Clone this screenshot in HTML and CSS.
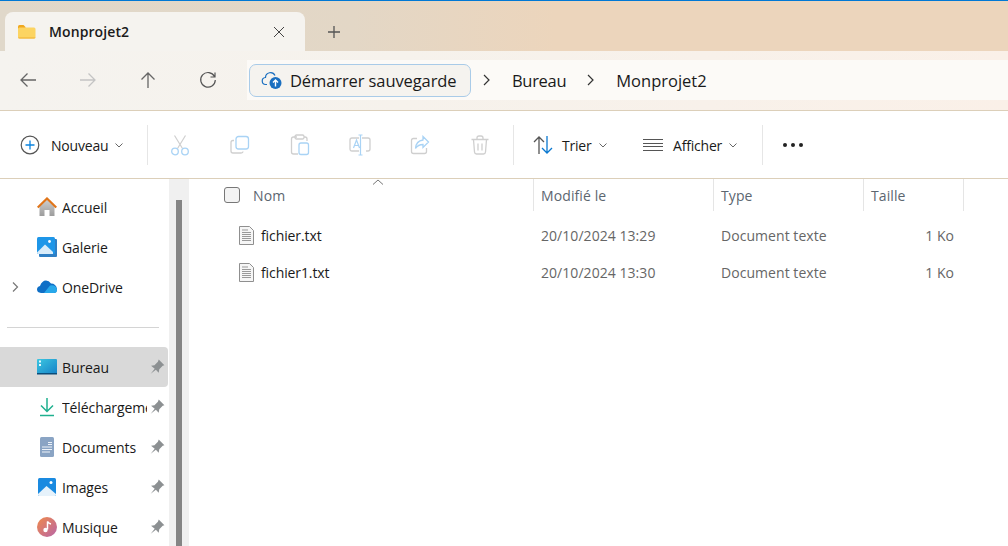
FILE: index.html

```html
<!DOCTYPE html>
<html lang="fr">
<head>
  <meta charset="UTF-8">
  <title>Monprojet2</title>
  <link rel="stylesheet" href="styles.css">
</head>
<body>
  <div class="titlebar">
    <div class="tab">
      <svg class="tab-icon" width="20" height="20" viewBox="0 0 20 20"><path d="M1 4.500q0-1.500 1.500-1.500h4l2 2v2H1z" fill="#f0a81e"/><path d="M1 7q0-1.500 1.500-1.500H17q1.500 0 1.500 1.500v8q0 1.500-1.500 1.500H2.500Q1 16.500 1 15z" fill="#fcd462"/><path d="M1 15.500h17.500v.2q-.3.8-1.500.8H2.500q-1.200 0-1.500-1z" fill="#f0b030"/></svg>
      <span class="tab-title">Monprojet2</span>
      <svg class="tab-close" width="12" height="12" viewBox="0 0 12 12"><path d="M1 1l10 10M11 1L1 11" stroke="#444" stroke-width="1" fill="none"/></svg>
    </div>
    <svg class="tab-add" width="14" height="14" viewBox="0 0 14 14"><path d="M7 1v12M1 7h12" stroke="#555" stroke-width="1.300" fill="none"/></svg>
  </div>

  <div class="navbar">
    <div class="nav-btn"><svg width="20" height="20" viewBox="0 0 20 20"><path d="M18 10H3M9.500 3.500L3 10l6.500 6.500" stroke="#666" stroke-width="1.300" fill="none"/></svg></div>
    <div class="nav-btn"><svg width="20" height="20" viewBox="0 0 20 20"><path d="M2 10h15M10.500 3.500L17 10l-6.500 6.500" stroke="#c4c4c4" stroke-width="1.300" fill="none"/></svg></div>
    <div class="nav-btn"><svg width="20" height="20" viewBox="0 0 20 20"><path d="M10 18V3M3.500 9.500L10 3l6.500 6.500" stroke="#666" stroke-width="1.300" fill="none"/></svg></div>
    <div class="nav-btn"><svg width="20" height="20" viewBox="0 0 20 20"><path d="M16.500 6.500A7.300 7.300 0 1 0 17.300 10M17 2.500v4.500h-4.500" stroke="#555" stroke-width="1.200" fill="none"/></svg></div>
    <div class="address">
      <div class="backup">
        <svg width="22" height="22" viewBox="0 0 22 22"><path d="M6 15.500H5a3.500 3.500 0 0 1-.5-7A5 5 0 0 1 14 6.500" stroke="#1a6fc0" stroke-width="1.200" fill="none"/><circle cx="14.500" cy="14" r="6" fill="#1a6fc0"/><path d="M14.500 17.500v-6M12 13.500l2.500-2.500 2.500 2.500" stroke="#fff" stroke-width="1.400" fill="none"/></svg>
        <span>Démarrer sauvegarde</span>
      </div>
      <svg class="crumb-sep" width="8" height="12" viewBox="0 0 8 12"><path d="M2 1l5 5-5 5" stroke="#333" stroke-width="1.200" fill="none"/></svg>
      <span class="crumb crumb-bureau">Bureau</span>
      <svg class="crumb-sep" width="8" height="12" viewBox="0 0 8 12"><path d="M2 1l5 5-5 5" stroke="#333" stroke-width="1.200" fill="none"/></svg>
      <span class="crumb">Monprojet2</span>
    </div>
  </div>

  <div class="toolbar">
    <div class="tool-new">
      <svg width="20" height="20" viewBox="0 0 20 20"><circle cx="10" cy="10" r="8.800" stroke="#555" stroke-width="1.200" fill="none"/><path d="M10 5.500v9M5.500 10h9" stroke="#0a84e0" stroke-width="1.300" fill="none"/></svg>
      <span>Nouveau</span>
      <svg class="chev" width="8" height="5" viewBox="0 0 8 5"><path d="M.5.500L4 4 7.500.500" stroke="#666" fill="none"/></svg>
    </div>
    <div class="tool-sep"></div>
    <div class="tool"><svg width="20" height="22" viewBox="0 0 20 22"><path d="M4.500 1.500l8 13M15.500 1.500l-8 13" stroke="#cfcfcf" stroke-width="1.200" fill="none"/><circle cx="5" cy="17.500" r="3.300" stroke="#a9d3f5" stroke-width="1.300" fill="none"/><circle cx="15" cy="17.500" r="3.300" stroke="#a9d3f5" stroke-width="1.300" fill="none"/></svg></div>
    <div class="tool"><svg width="20" height="20" viewBox="0 0 20 20"><path d="M4 5.500H3q-2 0-2 2V16q0 2 2 2h8q2 0 2-1.500" stroke="#cfcfcf" stroke-width="1.300" fill="none"/><rect x="6" y="1.500" width="12.500" height="12.500" rx="2.500" stroke="#a9d3f5" stroke-width="1.300" fill="none"/></svg></div>
    <div class="tool"><svg width="20" height="22" viewBox="0 0 20 22"><path d="M7 3H3.500Q1.500 3 1.500 5v13q0 2 2 2H8M14 3h1q2 0 2 2v2" stroke="#cfcfcf" stroke-width="1.300" fill="none"/><rect x="5" y="1" width="9" height="4" rx="1.500" stroke="#cfcfcf" stroke-width="1.300" fill="none"/><rect x="9" y="9" width="9.500" height="11.500" rx="2" stroke="#a9d3f5" stroke-width="1.300" fill="none"/></svg></div>
    <div class="tool"><svg width="22" height="22" viewBox="0 0 22 22"><path d="M13 4h6q2 0 2 2v9q0 2-2 2h-2M10 17H3q-2 0-2-2V6q0-2 2-2h7" stroke="#cfcfcf" stroke-width="1.300" fill="none"/><path d="M11.500 1v20M9.500 1h4M9.500 21h4M4.500 14l3-8 3 8M5.500 11.500h4.500" stroke="#a9d3f5" stroke-width="1.200" fill="none"/></svg></div>
    <div class="tool"><svg width="20" height="20" viewBox="0 0 20 20"><path d="M7 3.500H3.500q-2 0-2 2v11q0 2 2 2h11q2 0 2-2V13" stroke="#cfcfcf" stroke-width="1.300" fill="none"/><path d="M13 1.500l5.500 5.500L13 12.500V9.500q-5 0-7.500 4 .5-7.500 7.500-8.500z" stroke="#a9d3f5" stroke-width="1.300" fill="none"/></svg></div>
    <div class="tool"><svg width="18" height="20" viewBox="0 0 18 20"><path d="M.5 4.500h17M6 4.500V3q0-2 2-2h2q2 0 2 2v1.500M2.500 4.500l1 12.500q.2 2 2 2h7q1.800 0 2-2l1-12.500M7 8.500v7M11 8.500v7" stroke="#cfcfcf" stroke-width="1.300" fill="none"/></svg></div>
    <div class="tool-sep sep-sort"></div>
    <div class="tool-menu menu-sort">
      <svg width="20" height="20" viewBox="0 0 20 20"><path d="M6 19V2M1 7l5-5 5 5" stroke="#555" stroke-width="1.300" fill="none"/><path d="M14 1v17M9 13l5 5 5-5" stroke="#0a78d0" stroke-width="1.300" fill="none"/></svg>
      <span>Trier</span>
      <svg class="chev" width="8" height="5" viewBox="0 0 8 5"><path d="M.5.500L4 4 7.500.500" stroke="#666" fill="none"/></svg>
    </div>
    <div class="tool-menu menu-view">
      <svg width="20" height="20" viewBox="0 0 20 20"><path d="M0 4.500h20M0 8.500h20M0 11.500h20M0 15.500h20" stroke="#555" stroke-width="1.200" fill="none"/></svg>
      <span>Afficher</span>
      <svg class="chev" width="8" height="5" viewBox="0 0 8 5"><path d="M.5.500L4 4 7.500.500" stroke="#666" fill="none"/></svg>
    </div>
    <div class="tool-sep"></div>
    <div class="tool-more"><i></i><i></i><i></i></div>
  </div>

  <div class="content">
    <aside class="sidebar">
      <div class="side-item">
        <span class="side-chev"></span>
        <svg width="20" height="20" viewBox="0 0 20 20"><defs><linearGradient id="houseWall" x1="0" y1="0" x2="0" y2="1"><stop offset="0" stop-color="#d0d0d0"/><stop offset="1" stop-color="#9c9c9c"/></linearGradient></defs><path d="M2.500 9L10 2l7.500 7v10h-5v-6h-5v6h-5z" fill="url(#houseWall)"/><path d="M.7 10.500L10 1.500l9.300 9" stroke="#e0751a" stroke-width="2.200" fill="none"/></svg>
        <span class="side-label">Accueil</span>
      </div>
      <div class="side-item">
        <span class="side-chev"></span>
        <svg width="20" height="20" viewBox="0 0 20 20"><rect x="2" y="2" width="18" height="18" rx="1" fill="#2f7fc4"/><rect y="0" width="18" height="17" rx="1.500" fill="#1e96e8"/><path d="M0 15.500L8 7.500l8 7.500v2H1.500Q0 17 0 15.500z" fill="#d8ecfa"/><circle cx="12.500" cy="4.500" r="1.400" fill="#fff"/></svg>
        <span class="side-label">Galerie</span>
      </div>
      <div class="side-item">
        <span class="side-chev"><svg width="7" height="10" viewBox="0 0 7 10"><path d="M1 .5L5.500 5 1 9.500" stroke="#777" stroke-width="1.200" fill="none"/></svg></span>
        <svg width="20" height="20" viewBox="0 0 20 20"><path d="M4 16q-4-.500-4-3.500 0-3 3-3.500Q5 3.500 9 3.500q3 0 5 3 5 0 6 5.500 0 4-3 4z" fill="#0f6fc6"/><path d="M7 16l6-7.500q3-1 5.500 1Q20 11 20 13q0 3-3 3z" fill="#28a8ea"/></svg>
        <span class="side-label">OneDrive</span>
      </div>
      <div class="side-divider"></div>
      <div class="side-item side-current">
        <span class="side-chev"></span>
        <svg width="20" height="20" viewBox="0 0 20 20"><defs><linearGradient id="deskBg" x1="0" y1="0" x2="1" y2="1"><stop offset="0" stop-color="#3cc6e0"/><stop offset="1" stop-color="#1682c8"/></linearGradient></defs><rect y="2" width="20" height="15" rx="1" fill="url(#deskBg)"/><rect x="2" y="3.500" width="2" height="2" fill="#e4f8ff"/><rect x="2" y="7" width="2" height="2" fill="#e4f8ff"/><rect y="16" width="20" height="1.500" fill="#0b4c78"/></svg>
        <span class="side-label">Bureau</span>
        <svg class="pin" width="16" height="16" viewBox="0 0 14 14"><path d="M8.500.5l5 5-1.500.5-3 3-.5 3L6 9.500 1.500 13 5 8.500 1.800 6l3-.5 3-3z" fill="#8c9092"/></svg>
      </div>
      <div class="side-item">
        <span class="side-chev"></span>
        <svg width="20" height="20" viewBox="0 0 20 20"><path d="M10 1v13M4 8.500l6 6 6-6" stroke="#1fb08f" stroke-width="1.500" fill="none"/><path d="M3 18.500h14" stroke="#1fb08f" stroke-width="1.500"/></svg>
        <span class="side-label">Téléchargements</span>
        <svg class="pin" width="16" height="16" viewBox="0 0 14 14"><path d="M8.500.5l5 5-1.500.5-3 3-.5 3L6 9.500 1.500 13 5 8.500 1.800 6l3-.5 3-3z" fill="#8c9092"/></svg>
      </div>
      <div class="side-item">
        <span class="side-chev"></span>
        <svg width="20" height="20" viewBox="0 0 20 20"><rect x="3" y="0" width="14" height="20" rx="1.500" fill="#8aa4c4"/><path d="M5 10h10M5 12.500h10M5 15h8M11 5.500h4M11 7.500h4" stroke="#eef3f9"/></svg>
        <span class="side-label">Documents</span>
        <svg class="pin" width="16" height="16" viewBox="0 0 14 14"><path d="M8.500.5l5 5-1.500.5-3 3-.5 3L6 9.500 1.500 13 5 8.500 1.800 6l3-.5 3-3z" fill="#8c9092"/></svg>
      </div>
      <div class="side-item">
        <span class="side-chev"></span>
        <svg width="20" height="20" viewBox="0 0 20 20"><rect x="1" y="1" width="18" height="18" rx="1.500" fill="#1a8ae0"/><path d="M1 17L9.500 9 19 17v.5q0 1.500-1.500 1.500h-15Q1 19 1 17.500z" fill="#e6f2fb"/><circle cx="14" cy="5.500" r="1.500" fill="#fff"/></svg>
        <span class="side-label">Images</span>
        <svg class="pin" width="16" height="16" viewBox="0 0 14 14"><path d="M8.500.5l5 5-1.500.5-3 3-.5 3L6 9.500 1.500 13 5 8.500 1.800 6l3-.5 3-3z" fill="#8c9092"/></svg>
      </div>
      <div class="side-item">
        <span class="side-chev"></span>
        <svg width="20" height="20" viewBox="0 0 20 20"><defs><linearGradient id="musicBg" x1="0" y1="0" x2="1" y2="1"><stop offset="0" stop-color="#f08a4a"/><stop offset="1" stop-color="#b865a8"/></linearGradient></defs><circle cx="10" cy="10" r="10" fill="url(#musicBg)"/><path d="M10.500 4.500v8" stroke="#fff" stroke-width="1.500"/><path d="M10.500 4.500q1 2 3.500 2.500" stroke="#fff" stroke-width="1.500" fill="none"/><circle cx="8.500" cy="13" r="2.200" fill="#fff"/></svg>
        <span class="side-label">Musique</span>
        <svg class="pin" width="16" height="16" viewBox="0 0 14 14"><path d="M8.500.5l5 5-1.500.5-3 3-.5 3L6 9.500 1.500 13 5 8.500 1.800 6l3-.5 3-3z" fill="#8c9092"/></svg>
      </div>
    </aside>

    <div class="scroll-track"><div class="scroll-thumb"></div></div>

    <main class="files">
      <div class="sort-arrow"><svg width="12" height="6" viewBox="0 0 12 6"><path d="M1 5.500L6 1l5 4.500" stroke="#777" fill="none"/></svg></div>
      <div class="file-row file-head">
        <div class="head-cell head-name"><span class="check"></span><span class="head-nom">Nom</span></div>
        <div class="head-cell">Modifié le</div>
        <div class="head-cell">Type</div>
        <div class="head-cell">Taille</div>
      </div>
      <div class="file-row file-item">
        <div class="cell-name">
          <svg width="15" height="19" viewBox="0 0 15 19"><path d="M.5.500h10l4 4v14H.5z" fill="#f6f6f6" stroke="#8f8f8f"/><path d="M3 4h6M3 6.500h9M3 8.500h9M3 10.500h9M3 12.500h9M3 14.500h9" stroke="#999"/></svg>
          <span>fichier.txt</span>
        </div>
        <div class="cell">20/10/2024 13:29</div>
        <div class="cell">Document texte</div>
        <div class="cell cell-size">1 Ko</div>
      </div>
      <div class="file-row file-item">
        <div class="cell-name">
          <svg width="15" height="19" viewBox="0 0 15 19"><path d="M.5.500h10l4 4v14H.5z" fill="#f6f6f6" stroke="#8f8f8f"/><path d="M3 4h6M3 6.500h9M3 8.500h9M3 10.500h9M3 12.500h9M3 14.500h9" stroke="#999"/></svg>
          <span>fichier1.txt</span>
        </div>
        <div class="cell">20/10/2024 13:30</div>
        <div class="cell">Document texte</div>
        <div class="cell cell-size">1 Ko</div>
      </div>
    </main>
  </div>
</body>
</html>
```

FILE: styles.css

```css
* {
  box-sizing: border-box;
}

html, body {
  height: 546px;
}

body {
  margin: 0;
  overflow: hidden;
  background: #fff;
  color: #1a1a1a;
  font-family: 'Open Sans', 'Noto Sans', sans-serif;
  font-size: 14px;
  letter-spacing: -0.2px;
}

svg {
  display: block;
  flex: none;
}

/* title band */
.titlebar {
  height: 51px;
  display: flex;
  align-items: flex-end;
  padding-left: 5px;
  border-top: 1px solid #0078d4;
  background: linear-gradient(90deg, #e0d8ca 0%, #e3d7c6 35%, #ecd5bc 55%, #ecd5bc 100%);
}

.tab {
  width: 300px;
  height: 39px;
  display: flex;
  align-items: center;
  padding: 0 20px 0 12px;
  background: #f5f3ef;
  border-radius: 8px 8px 0 0;
}

.tab-title {
  margin-left: 12px;
  font-weight: 600;
  letter-spacing: 0.1px;
  flex: 1;
}

.tab-add {
  margin: 0 0 12px 22px;
}

/* back / forward and address */
.navbar {
  height: 60px;
  display: flex;
  align-items: flex-start;
  padding: 9px 0 0 8px;
  background: linear-gradient(90deg, #f5f3ef 0%, #f6f2ec 40%, #faf0e8 100%);
  border-bottom: 1px solid #dccfb9;
}

.nav-btn {
  width: 40px;
  height: 40px;
  margin-right: 20px;
  display: flex;
  align-items: center;
  justify-content: center;
}

.nav-btn:nth-child(4) {
  margin-right: 19px;
}

.address {
  flex: 1;
  height: 40px;
  display: flex;
  align-items: center;
  padding-left: 2px;
  background: #fcfaf7;
  font-size: 16.5px;
}

.backup {
  width: 222px;
  height: 33px;
  display: flex;
  align-items: center;
  gap: 7px;
  padding-left: 11px;
  background: #f5f3ef;
  border: 1.5px solid #a9cbe8;
  border-radius: 7px;
  letter-spacing: -0.1px;
}

.crumb-sep {
  margin-left: 11px;
}

.crumb {
  margin-left: 22px;
  letter-spacing: 0;
}

.crumb-bureau {
  margin-right: 9px;
  letter-spacing: -0.3px;
}

/* command bar */
.toolbar {
  height: 68px;
  display: flex;
  align-items: center;
  padding: 1px 0 0 20px;
  border-bottom: 1px solid #dccfb9;
}

.tool-new {
  width: 127px;
  display: flex;
  align-items: center;
}

.tool-new span {
  margin-left: 11px;
}

.chev {
  margin-left: 7px;
}

.tool-sep {
  width: 1px;
  height: 40px;
  background: #e6e6e6;
}

.tool {
  width: 60px;
  display: flex;
  justify-content: center;
}

.tool-sep + .tool {
  margin-left: 2px;
}

.sep-sort {
  margin-left: 3px;
}

.tool-menu {
  display: flex;
  align-items: center;
  padding-left: 19px;
}

.tool-menu span {
  margin-left: 9px;
}

.menu-sort {
  width: 110px;
}

.menu-view {
  width: 138px;
}

.menu-view span {
  margin-left: 10px;
}

.tool-more {
  width: 60px;
  display: flex;
  justify-content: center;
  gap: 4px;
}

.tool-more i {
  width: 4px;
  height: 4px;
  border-radius: 50%;
  background: #222;
}

/* lower part */
.content {
  height: 367px;
  display: flex;
  overflow: hidden;
}

.sidebar {
  width: 169px;
  flex: none;
  padding-top: 8px;
  letter-spacing: -0.1px;
}

.side-item {
  height: 40px;
  display: flex;
  align-items: center;
}

.side-current {
  background: #d9d9d9;
  border-radius: 0 4px 4px 0;
  margin-right: 1px;
}

.side-chev {
  width: 37px;
  flex: none;
  padding-left: 12px;
}

.side-label {
  width: 85px;
  margin-left: 5px;
  overflow: hidden;
  white-space: nowrap;
}

.pin {
  margin-left: 2px;
}

.side-divider {
  height: 1px;
  margin: 20px 10px 19px 7px;
  background: #d4d4d4;
}

.scroll-track {
  width: 20px;
  flex: none;
  padding: 21px 7px 0;
  background: #f0f0f0;
}

.scroll-thumb {
  height: 100%;
  background: #858585;
}

/* file list */
.files {
  position: relative;
  flex: 1;
  padding-left: 1px;
}

.sort-arrow {
  position: absolute;
  left: 183px;
  top: 0;
}

.file-row {
  display: grid;
  grid-template-columns: 344px 180px 150px 100px;
}

.file-head {
  height: 32px;
  color: #5c6670;
  letter-spacing: 0.1px;
}

.head-cell {
  display: flex;
  align-items: center;
  padding-left: 7px;
  border-right: 1px solid #e5e5e5;
}

.head-name {
  padding-left: 34px;
}

.check {
  width: 16px;
  height: 16px;
  background: #f3f3f3;
  border: 1px solid #777;
  border-radius: 3px;
}

.head-nom {
  margin-left: 13px;
}

.file-item {
  height: 37px;
  align-items: center;
  color: #666;
  letter-spacing: 0.05px;
}

.file-head + .file-item {
  margin-top: 6px;
}

.cell-name {
  display: flex;
  align-items: center;
  gap: 7px;
  padding-left: 49px;
  color: #1a1a1a;
  letter-spacing: -0.1px;
}

.cell {
  padding-left: 7px;
}

.cell-size {
  padding: 0 10px 0 0;
  text-align: right;
}
```
